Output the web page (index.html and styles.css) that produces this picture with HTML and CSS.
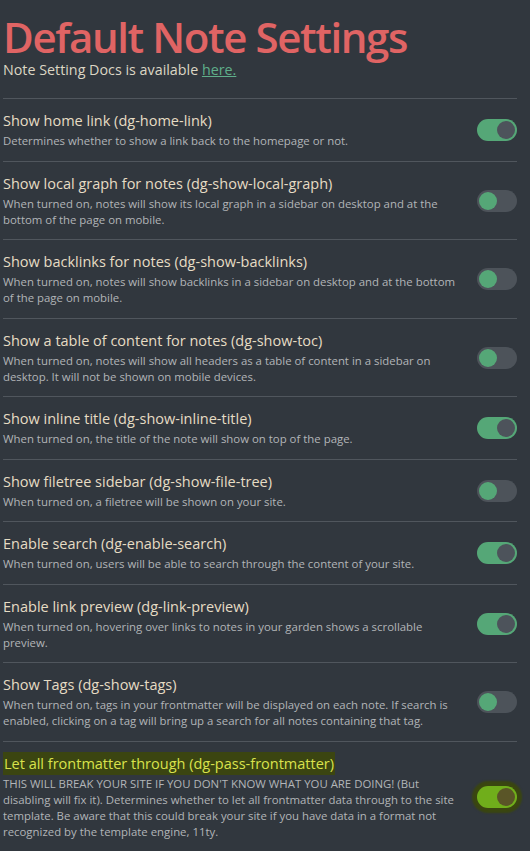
FILE: index.html
```html
<!DOCTYPE html>
<html lang="en">
<head>
    <meta charset="UTF-8">
    <meta name="viewport" content="width=device-width, initial-scale=1.0">
    <title>Default Note Settings</title>
    <link rel="stylesheet" href="styles.css">
</head>
<body>

    <div class="page">
        <h1>Default Note Settings</h1>
        <p class="intro">Note Setting Docs is available <a href="#">here.</a></p>

        <div class="setting">
            <div class="info">
                <div class="name">Show home link (dg-home-link)</div>
                <div class="desc">Determines whether to show a link back to the homepage or not.</div>
            </div>
            <div class="toggle on"></div>
        </div>

        <div class="setting">
            <div class="info">
                <div class="name">Show local graph for notes (dg-show-local-graph)</div>
                <div class="desc">When turned on, notes will show its local graph in a sidebar on desktop and at the bottom of the page on mobile.</div>
            </div>
            <div class="toggle"></div>
        </div>

        <div class="setting">
            <div class="info">
                <div class="name">Show backlinks for notes (dg-show-backlinks)</div>
                <div class="desc">When turned on, notes will show backlinks in a sidebar on desktop and at the bottom of the page on mobile.</div>
            </div>
            <div class="toggle"></div>
        </div>

        <div class="setting">
            <div class="info">
                <div class="name">Show a table of content for notes (dg-show-toc)</div>
                <div class="desc">When turned on, notes will show all headers as a table of content in a sidebar on desktop. It will not be shown on mobile devices.</div>
            </div>
            <div class="toggle"></div>
        </div>

        <div class="setting">
            <div class="info">
                <div class="name">Show inline title (dg-show-inline-title)</div>
                <div class="desc">When turned on, the title of the note will show on top of the page.</div>
            </div>
            <div class="toggle on"></div>
        </div>

        <div class="setting">
            <div class="info">
                <div class="name">Show filetree sidebar (dg-show-file-tree)</div>
                <div class="desc">When turned on, a filetree will be shown on your site.</div>
            </div>
            <div class="toggle"></div>
        </div>

        <div class="setting">
            <div class="info">
                <div class="name">Enable search (dg-enable-search)</div>
                <div class="desc">When turned on, users will be able to search through the content of your site.</div>
            </div>
            <div class="toggle on"></div>
        </div>

        <div class="setting">
            <div class="info">
                <div class="name">Enable link preview (dg-link-preview)</div>
                <div class="desc">When turned on, hovering over links to notes in your garden shows a scrollable preview.</div>
            </div>
            <div class="toggle on"></div>
        </div>

        <div class="setting">
            <div class="info">
                <div class="name">Show Tags (dg-show-tags)</div>
                <div class="desc">When turned on, tags in your frontmatter will be displayed on each note. If search is enabled, clicking on a tag will bring up a search for all notes containing that tag.</div>
            </div>
            <div class="toggle"></div>
        </div>

        <div class="setting danger">
            <div class="info">
                <div class="name"><span class="mark">Let all frontmatter through (dg-pass-frontmatter)</span></div>
                <div class="desc">THIS WILL BREAK YOUR SITE IF YOU DON'T KNOW WHAT YOU ARE DOING! (But disabling will fix it). Determines whether to let all frontmatter data through to the site template. Be aware that this could break your site if you have data in a format not recognized by the template engine, 11ty.</div>
            </div>
            <div class="toggle on"></div>
        </div>
    </div>

</body>
</html>
```

FILE: styles.css
```css
body {
    margin: 0;
    background: #31373e;
    font-family: "Open Sans", "Noto Sans", sans-serif;
    color: #ddd;
}
.page {
    padding: 0 13px 0 3px;
}
h1 {
    margin: 0;
    padding-top: 15px;
    font-size: 42px;
    font-weight: 600;
    line-height: 44px;
    color: #e06464;
    letter-spacing: -1.4px;
}
.intro {
    margin: 2px 0 19px 0;
    font-size: 14.3px;
    line-height: 18px;
    color: #dcd6c4;
}
.intro a {
    color: #5fae8a;
}
.setting {
    display: flex;
    align-items: center;
    border-top: 1px solid #50565d;
    padding: 12px 0 11.5px 0;
}
.info {
    flex: 1;
    padding-right: 12px;
}
.name {
    font-size: 14.5px;
    line-height: 20px;
    color: #e6dcc4;
}
.desc {
    font-size: 11.4px;
    line-height: 16px;
    color: #b2b5b8;
    padding-top: 2px;
}
.toggle {
    position: relative;
    width: 40px;
    height: 22px;
    border-radius: 11px;
    background: #4d535a;
    flex-shrink: 0;
}
.toggle::after {
    content: "";
    position: absolute;
    top: 2px;
    left: 2px;
    width: 18px;
    height: 18px;
    border-radius: 50%;
    background: #55a777;
}
.toggle.on {
    background: #55a777;
}
.toggle.on::after {
    left: 20px;
    background: #4d535b;
}
.danger .mark {
    background: #3b4511;
    color: #d9e24c;
    padding: 2px 1px;
}
.danger .toggle.on {
    background: #70ae1b;
    box-shadow: 0 0 2px 5px #3a4610;
}
.danger .toggle.on::after {
    background: #5a5527;
}
```
